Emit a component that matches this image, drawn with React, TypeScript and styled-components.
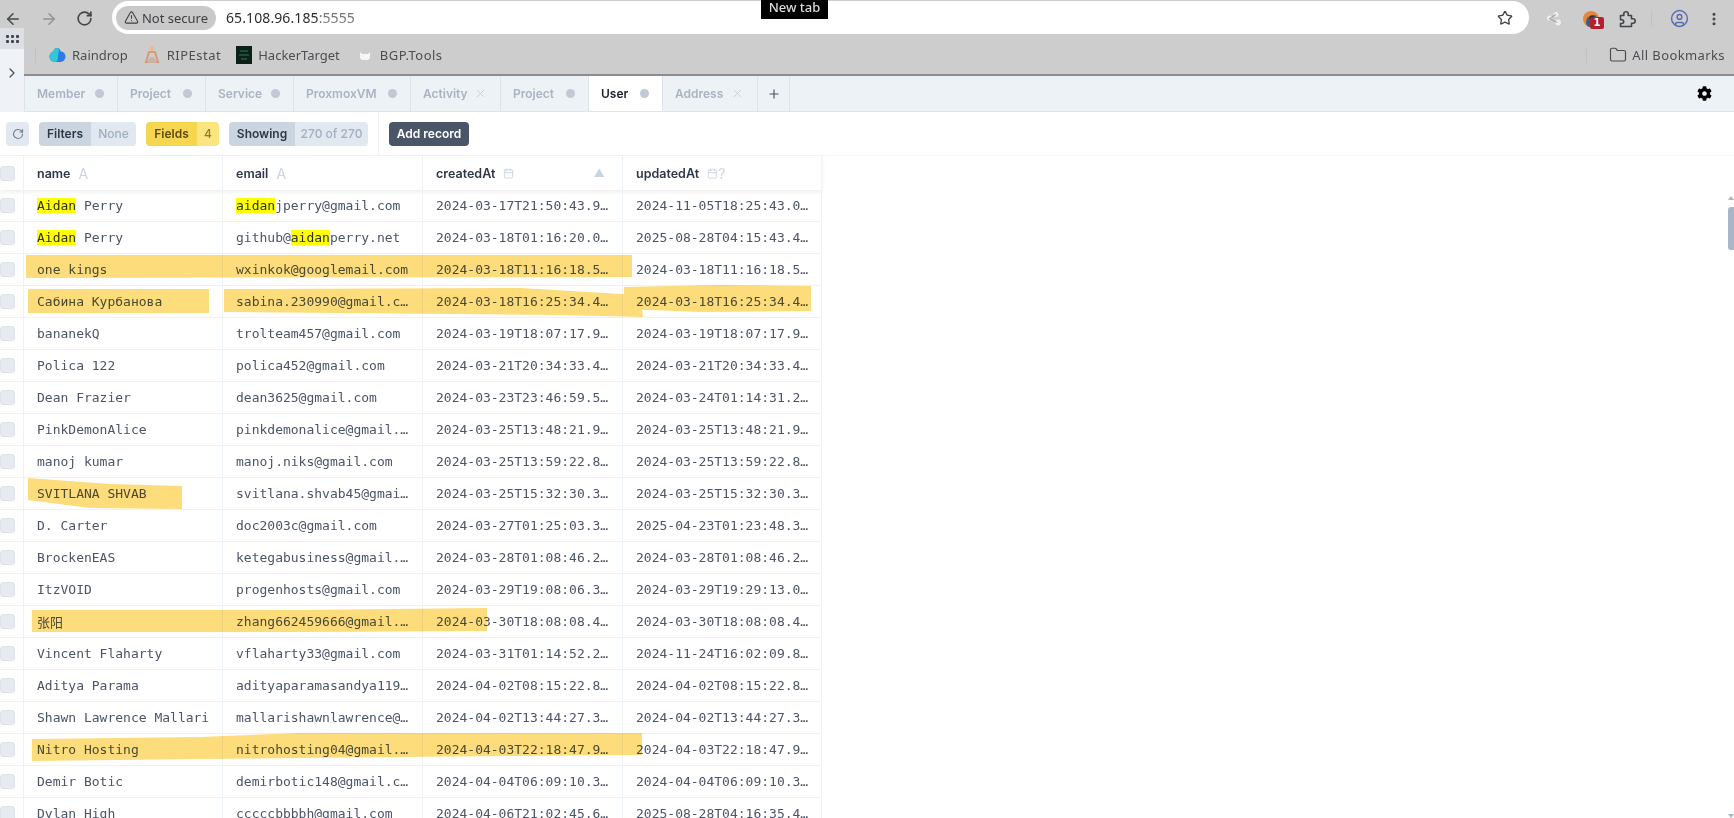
import React from "react";
import styled, { createGlobalStyle } from "styled-components";
import { ArrowLeft, ArrowRight, RotateCw, Star, TriangleAlert, CircleUser, EllipsisVertical, Folder, Plus, X, ChevronRight, Calendar } from "lucide-react";
import { FaCog } from "react-icons/fa";

const Global = createGlobalStyle`
  html, body { margin: 0; padding: 0; background: #fff; overflow: hidden; }
  * { box-sizing: border-box; }
`;

const UI = `"Noto Sans", "Open Sans", sans-serif`;
const APP = `Inter, "Liberation Sans", sans-serif`;
const MONO = `"DejaVu Sans Mono", "Noto Sans CJK SC", monospace`;

const Page = styled.div`
  position: relative;
  width: 1734px;
  height: 818px;
  overflow: hidden;
  display: flex;
  flex-direction: column;
  & > * { flex: none; }
`;

const BrowserBar = styled.div`
  height: 37px;
  background: #cdcdcd;
  display: flex;
  align-items: center;
  padding: 0 0 0 4px;
  color: #45494d;
`;
const Nav = styled.div`
  display: flex;
  gap: 18px;
  margin-right: 19px;
`;
const NavIcon = styled.span<{ $dim?: boolean }>`
  display: flex;
  color: ${(p) => (p.$dim ? "#8f9295" : "#43474b")};
`;
const Omnibox = styled.div`
  width: 1417px;
  height: 33px;
  margin-top: -2px;
  border-radius: 17px;
  background: #fff;
  display: flex;
  align-items: center;
  padding: 0 16px 0 4px;
  font-family: ${UI};
`;
const Secure = styled.div`
  height: 24px;
  width: 100px;
  border-radius: 12px;
  background: #c9c9c9;
  display: flex;
  align-items: center;
  justify-content: center;
  gap: 3px;
  font-size: 13px;
  color: #3b3f43;
  margin-right: 10px;
`;
const Url = styled.div`
  font-size: 14px;
  color: #2a2d30;
  letter-spacing: 0.1px;
  flex: 1;
  span { color: #74777b; }
`;
const Actions = styled.div`
  display: flex;
  align-items: center;
  margin-left: auto;
  height: 100%;
  flex: 1;
  position: relative;
`;
const ActionSlot = styled.span<{ $w: number }>`
  width: ${(p) => p.$w}px;
  display: flex;
  justify-content: center;
  flex: none;
`;
const ThinSep = styled.span`
  width: 1px;
  height: 16px;
  background: #c2c2c2;
  flex: none;
`;
const ExtWrap = styled.span`
  position: relative;
  display: flex;
  width: 16px;
  height: 16px;
`;
const Badge = styled.span`
  position: absolute;
  left: 7px;
  top: 6px;
  width: 14px;
  height: 12px;
  border-radius: 2px;
  background: #b3202f;
  color: #fff;
  font: 700 10px/12px "DejaVu Sans", sans-serif;
  text-align: center;
`;
const TabTip = styled.div`
  position: absolute;
  left: 761px;
  top: 0;
  width: 67px;
  height: 19px;
  background: #000;
  color: #dcdcdc;
  font: 500 13px/15px ${UI};
  text-align: center;
`;

const BookmarkBar = styled.div`
  height: 39px;
  background: #cdcdcd;
  border-bottom: 2px solid #8d8d8d;
  display: flex;
  align-items: center;
  padding: 0 0 2px 35px;
  font-family: ${UI};
  font-size: 13px;
  color: #4a4d51;
`;
const Bookmark = styled.span<{ $gap: number; $left: number; $ls?: number }>`
  display: flex;
  align-items: center;
  gap: ${(p) => p.$gap}px;
  margin-left: ${(p) => p.$left}px;
  letter-spacing: ${(p) => p.$ls ?? 0}px;
  white-space: nowrap;
`;
const AllMarks = styled.div`
  margin-left: auto;
  display: flex;
  align-items: center;
  gap: 5px;
  padding-right: 9px;
  letter-spacing: 0.4px;
`;
const MarksSep = styled(ThinSep)`
  margin-right: 17px;
`;

const SidePanel = styled.div`
  position: absolute;
  left: 0;
  top: 28px;
  width: 24px;
  height: 84px;
  display: flex;
  flex-direction: column;
  background: #eff2f6;
`;
const SideTop = styled.div`
  height: 21px;
  background: #dcdfe4;
  display: flex;
  align-items: center;
  justify-content: center;
`;
const SideChevron = styled.div`
  height: 32px;
  display: flex;
  align-items: flex-end;
  justify-content: center;
  color: #4b5058;
`;

const TabsBar = styled.div`
  height: 36px;
  background: #edf2f7;
  border-bottom: 1px solid #dfe4ea;
  display: flex;
  align-items: stretch;
  padding-left: 24px;
  font-family: ${APP};
`;
const Tab = styled.div<{ $active?: boolean; $w: number }>`
  width: ${(p) => p.$w}px;
  flex: none;
  display: flex;
  align-items: center;
  justify-content: space-between;
  padding: 0 13px 0 12px;
  font-size: 12px;
  font-weight: 600;
  border-left: 1px solid #dde3ea;
  color: ${(p) => (p.$active ? "#1a202c" : "#a9b4c3")};
  background: ${(p) => (p.$active ? "#fff" : "#edf2f7")};
`;
const TabDot = styled.span`
  width: 9px;
  height: 9px;
  border-radius: 50%;
  background: #c0c9d4;
`;
const AddTab = styled.div`
  width: 33px;
  display: flex;
  align-items: center;
  justify-content: center;
  border-left: 1px solid #dde3ea;
  border-right: 1px solid #dde3ea;
  color: #4a5568;
`;
const Gear = styled.div`
  margin-left: auto;
  padding-right: 22px;
  display: flex;
  align-items: center;
  color: #000;
`;

const ToolBar = styled.div`
  height: 44px;
  display: flex;
  align-items: center;
  padding-left: 6px;
  border-bottom: 1px solid #f2f4f7;
  font-family: ${APP};
  font-size: 12px;
  font-weight: 600;
`;
const Reload = styled.div`
  width: 23px;
  height: 24px;
  border-radius: 4px;
  background: #e2e8f0;
  display: flex;
  align-items: center;
  justify-content: center;
  color: #718096;
  margin-right: 10px;
`;
const Pill = styled.div<{ $w: number; $mr: number }>`
  width: ${(p) => p.$w}px;
  margin-right: ${(p) => p.$mr}px;
  height: 24px;
  border-radius: 4px;
  overflow: hidden;
  display: flex;
  flex: none;
`;
const PillKey = styled.span<{ $w: number; $yellow?: boolean }>`
  width: ${(p) => p.$w}px;
  display: flex;
  align-items: center;
  justify-content: center;
  background: ${(p) => (p.$yellow ? "#f6d651" : "#cbd5e0")};
  color: ${(p) => (p.$yellow ? "#5f4b10" : "#2d3748")};
`;
const PillValue = styled.span<{ $yellow?: boolean }>`
  flex: 1;
  display: flex;
  align-items: center;
  justify-content: center;
  font-weight: 500;
  background: ${(p) => (p.$yellow ? "#fae57f" : "#e2e8f0")};
  color: ${(p) => (p.$yellow ? "#8f7a2c" : "#a0aec0")};
`;
const ToolSep = styled.span`
  width: 1px;
  height: 100%;
  background: #f0f2f5;
  margin: 0 10px 0 0;
`;
const AddRecord = styled.div`
  width: 80px;
  height: 24px;
  border-radius: 4px;
  background: #4a5568;
  color: #fff;
  display: flex;
  align-items: center;
  justify-content: center;
`;

const Grid = styled.div`
  width: 822px;
  display: flex;
  flex-direction: column;
`;
const HeadRow = styled.div`
  display: grid;
  grid-template-columns: 24px 199px 200px 200px 199px;
  height: 34px;
  flex: none;
  font-family: ${APP};
  font-size: 12.5px;
  font-weight: 600;
  color: #2d3748;
  box-shadow: 0 2px 4px rgba(0, 0, 0, 0.07);
`;
const Row = styled.div`
  display: grid;
  grid-template-columns: 24px 199px 200px 200px 199px;
  height: 32px;
  flex: none;
  border-bottom: 1px solid #edf2f7;
  font-family: ${MONO};
  font-size: 13px;
  color: #4a5568;
`;
const CheckCell = styled.div`
  display: flex;
  align-items: center;
  border-right: 1px solid #edf2f7;
`;
const Check = styled.span`
  width: 15px;
  height: 15px;
  border-radius: 3px;
  background: #e6ebf2;
  border: 1px solid #dee3ea;
`;
const HeadCell = styled.div`
  display: flex;
  align-items: center;
  gap: 8px;
  padding: 0 13px;
  border-right: 1px solid #edf2f7;
  position: relative;
`;
const Cell = styled.div`
  display: flex;
  align-items: center;
  padding: 0 13px;
  border-right: 1px solid #edf2f7;
  white-space: pre;
  overflow: hidden;
  mark { background: #ffff00; color: #2d3320; }
`;
const TypeGlyph = styled.span`
  color: #cbd5e0;
  font-weight: 400;
  font-size: 14px;
  display: flex;
  align-items: center;
`;
const SortMark = styled.span`
  margin-left: auto;
  margin-right: 4px;
  color: #cbd5e0;
  font-size: 11px;
`;

const Scrollbar = styled.div`
  position: absolute;
  right: 0;
  top: 196px;
  bottom: 0;
  width: 6px;
  display: flex;
  flex-direction: column;
  justify-content: space-between;
`;
const ScrollArrow = styled.span<{ $down?: boolean }>`
  width: 0;
  height: 0;
  border-left: 3px solid transparent;
  border-right: 3px solid transparent;
  ${(p) => (p.$down ? "border-top: 4px solid #a9b6c9;" : "border-bottom: 4px solid #a9b6c9;")}
`;
const ScrollThumb = styled.span`
  position: absolute;
  top: 11px;
  left: 0;
  width: 6px;
  height: 43px;
  border-radius: 3px 0 0 3px;
  background: #a9b6c9;
`;
const Marker = styled.svg`
  position: absolute;
  left: 0;
  top: 0;
  width: 1734px;
  height: 818px;
  mix-blend-mode: multiply;
  pointer-events: none;
`;

const marks = [
  "26,255 632,255 632,277 26,278",
  "28,289 209,289 209,313 28,313",
  "224,289 520,288 640,295 643,317 560,315 224,312",
  "624,287 720,285 811,286 811,311 700,312 624,309",
  "28,478 110,484 182,486 182,509 90,508 28,500",
  "32,610 300,610 487,608 487,631 300,632 32,632",
  "32,739 200,737 300,733 642,733 642,755 400,757 200,759 32,761",
];

type R = [React.ReactNode, React.ReactNode, string, string?];
const rows: R[] = [
  [<><mark>Aidan</mark> Perry</>, <><mark>aidan</mark>jperry@gmail.com</>, "2024-03-17T21:50:43.9…", "2024-11-05T18:25:43.0…"],
  [<><mark>Aidan</mark> Perry</>, <>github@<mark>aidan</mark>perry.net</>, "2024-03-18T01:16:20.0…", "2025-08-28T04:15:43.4…"],
  ["one kings", "wxinkok@googlemail.com", "2024-03-18T11:16:18.5…"],
  ["Сабина Курбанова", "sabina.230990@gmail.c…", "2024-03-18T16:25:34.4…"],
  ["bananekQ", "trolteam457@gmail.com", "2024-03-19T18:07:17.9…"],
  ["Polica 122", "polica452@gmail.com", "2024-03-21T20:34:33.4…"],
  ["Dean Frazier", "dean3625@gmail.com", "2024-03-23T23:46:59.5…", "2024-03-24T01:14:31.2…"],
  ["PinkDemonAlice", "pinkdemonalice@gmail.…", "2024-03-25T13:48:21.9…"],
  ["manoj kumar", "manoj.niks@gmail.com", "2024-03-25T13:59:22.8…"],
  ["SVITLANA SHVAB", "svitlana.shvab45@gmai…", "2024-03-25T15:32:30.3…"],
  ["D. Carter", "doc2003c@gmail.com", "2024-03-27T01:25:03.3…", "2025-04-23T01:23:48.3…"],
  ["BrockenEAS", "ketegabusiness@gmail.…", "2024-03-28T01:08:46.2…"],
  ["ItzVOID", "progenhosts@gmail.com", "2024-03-29T19:08:06.3…", "2024-03-29T19:29:13.0…"],
  ["张阳", "zhang662459666@gmail.…", "2024-03-30T18:08:08.4…"],
  ["Vincent Flaharty", "vflaharty33@gmail.com", "2024-03-31T01:14:52.2…", "2024-11-24T16:02:09.8…"],
  ["Aditya Parama", "adityaparamasandya119…", "2024-04-02T08:15:22.8…"],
  ["Shawn Lawrence Mallari", "mallarishawnlawrence@…", "2024-04-02T13:44:27.3…"],
  ["Nitro Hosting", "nitrohosting04@gmail.…", "2024-04-03T22:18:47.9…"],
  ["Demir Botic", "demirbotic148@gmail.c…", "2024-04-04T06:09:10.3…"],
  ["Dylan High", "cccccbbbbh@gmail.com", "2024-04-06T21:02:45.6…", "2025-08-28T04:16:35.4…"],
];

const tabs: { n: string; w: number; x?: boolean; a?: boolean }[] = [
  { n: "Member", w: 93 },
  { n: "Project", w: 88 },
  { n: "Service", w: 88 },
  { n: "ProxmoxVM", w: 117 },
  { n: "Activity", w: 90, x: true },
  { n: "Project", w: 88 },
  { n: "User", w: 74, a: true },
  { n: "Address", w: 95, x: true },
];

const Raindrop = () => (
  <svg width="17" height="16" viewBox="0 0 17 16">
    <path d="M8 1c2 0 3.400 1.600 3.600 3.500C14 4.400 16.500 6.400 16.500 9.600c0 3-2 5.400-5 5.400H6C2.800 15 .5 12.700.5 9.800.5 6.500 3.500 4.500 4.500 4.500 4.800 2.500 6 1 8 1z" fill="#2a7de1" />
    <path d="M8 1c-2 0-3.200 1.500-3.500 3.500C2.500 5 .5 7 .5 9.800c0 2.900 2.300 5.200 5.500 5.200 2 0 3-2 3-5 0-3 .8-5 1-6.500C9.600 2 9 1 8 1z" fill="#31c6d8" />
  </svg>
);
const Ripe = () => (
  <svg width="16" height="19" viewBox="0 0 16 19">
    <circle cx="8" cy="3.500" r="2.500" fill="#e5b99a" />
    <path d="M5 7h6l3 10H2z" fill="none" stroke="#d99a78" strokeWidth="2" />
    <path d="M4 18c0-4 2-6 4-6s4 2 4 6z" fill="#c9b2a6" />
  </svg>
);
const Hacker = () => (
  <svg width="16" height="18" viewBox="0 0 16 18">
    <rect width="16" height="18" fill="#0d2018" />
    <path d="M4 5h8M3 9h10M5 13h6" stroke="#2f7a58" strokeWidth="1" />
  </svg>
);
const Bgp = () => (
  <svg width="12" height="10" viewBox="0 0 12 10">
    <path d="M1 2l2 2h6l2-2v5c0 1.500-1 3-3 3H4C2 10 1 8.500 1 7z" fill="#f6f6f6" />
  </svg>
);
const Share = () => (
  <svg width="16" height="16" viewBox="0 0 16 16" fill="#eeeeee">
    <circle cx="3.500" cy="7" r="2.500" />
    <circle cx="10" cy="3.500" r="2.500" />
    <circle cx="12" cy="11.500" r="3" />
    <path d="M3 7.500l6.500-4.500.6 1-6.500 4.500zM3.500 7l8 4-.5 1-8-4z" fill="#a5a5a5" />
  </svg>
);
const ExtIcon = () => (
  <svg width="16" height="16" viewBox="0 0 16 16">
    <circle cx="8" cy="8" r="8" fill="#e8863c" />
    <path d="M3 12c0-5 3-8 8-8 2 0 3 2 3 4 0 5-3 8-7 8-2 0-4-2-4-4z" fill="#3d5f7c" />
    <circle cx="9" cy="7" r="2.500" fill="#27313b" />
  </svg>
);
const ExtensionsIcon = () => (
  <svg width="18" height="18" viewBox="0 0 18 18" fill="none" stroke="#42464a" strokeWidth="1.6" strokeLinejoin="round">
    <path d="M2.500 5.500h3.300V4a2.200 2.200 0 0 1 4.400 0v1.500h3.300v3.300H15a2.200 2.200 0 0 1 0 4.400h-1.500v3.300h-11v-3h1.300a1.900 1.900 0 0 0 0-3.800H2.500z" />
  </svg>
);
const Dots = () => (
  <svg width="13" height="10" viewBox="0 0 13 10" fill="#3d4650">
    {[0, 5, 10].map((x) => [1, 6].map((y) => <rect key={`${x}${y}`} x={x} y={y} width="3" height="3" rx="1" />))}
  </svg>
);

export default function App() {
  return (
    <Page>
      <Global />
      <BrowserBar>
        <Nav>
          <NavIcon><ArrowLeft size={18} strokeWidth={2} /></NavIcon>
          <NavIcon $dim><ArrowRight size={18} strokeWidth={2} /></NavIcon>
          <NavIcon><RotateCw size={17} strokeWidth={2.4} /></NavIcon>
        </Nav>
        <Omnibox>
          <Secure><TriangleAlert size={15} strokeWidth={1.7} />Not secure</Secure>
          <Url>65.108.96.185<span>:5555</span></Url>
          <Star size={16} strokeWidth={2} color="#3f4347" />
        </Omnibox>
        <Actions>
          <ActionSlot $w={50}><Share /></ActionSlot>
          <ActionSlot $w={24}>
            <ExtWrap><ExtIcon /><Badge>1</Badge></ExtWrap>
          </ActionSlot>
          <ActionSlot $w={48}><ExtensionsIcon /></ActionSlot>
          <ThinSep />
          <ActionSlot $w={54}><CircleUser size={19} strokeWidth={1.8} color="#5c6bb0" /></ActionSlot>
          <ActionSlot $w={16}><EllipsisVertical size={18} strokeWidth={2.6} color="#42464a" /></ActionSlot>
        </Actions>
      </BrowserBar>
      <BookmarkBar>
        <ThinSep />
        <Bookmark $gap={6} $left={13}><Raindrop />Raindrop</Bookmark>
        <Bookmark $gap={7} $left={16} $ls={0.5}><Ripe />RIPEstat</Bookmark>
        <Bookmark $gap={6} $left={15}><Hacker />HackerTarget</Bookmark>
        <Bookmark $gap={9} $left={19} $ls={0.5}><Bgp />BGP.Tools</Bookmark>
        <AllMarks>
          <MarksSep />
          <Folder size={18} strokeWidth={1.6} />
          All Bookmarks
        </AllMarks>
      </BookmarkBar>
      <TabsBar>
        {tabs.map((t, i) => (
          <Tab key={i} $w={t.w} $active={t.a}>
            {t.n}
            {t.x ? <X size={13} strokeWidth={1.6} color="#c4ccd7" /> : <TabDot />}
          </Tab>
        ))}
        <AddTab><Plus size={14} strokeWidth={2} /></AddTab>
        <Gear><FaCog size={15} /></Gear>
      </TabsBar>
      <ToolBar>
        <Reload><RotateCw size={12} strokeWidth={2.4} /></Reload>
        <Pill $w={97} $mr={10}><PillKey $w={52}>Filters</PillKey><PillValue>None</PillValue></Pill>
        <Pill $w={73} $mr={10}><PillKey $w={51} $yellow>Fields</PillKey><PillValue $yellow>4</PillValue></Pill>
        <Pill $w={139} $mr={10}><PillKey $w={66}>Showing</PillKey><PillValue>270 of 270</PillValue></Pill>
        <ToolSep />
        <AddRecord>Add record</AddRecord>
      </ToolBar>
      <Grid>
        <HeadRow>
          <CheckCell><Check /></CheckCell>
          <HeadCell>name <TypeGlyph>A</TypeGlyph></HeadCell>
          <HeadCell>email <TypeGlyph>A</TypeGlyph></HeadCell>
          <HeadCell>createdAt <TypeGlyph><Calendar size={11} /></TypeGlyph><SortMark>▲</SortMark></HeadCell>
          <HeadCell>updatedAt <TypeGlyph><Calendar size={11} />?</TypeGlyph></HeadCell>
        </HeadRow>
        {rows.map((r, i) => (
          <Row key={i}>
            <CheckCell><Check /></CheckCell>
            <Cell>{r[0]}</Cell>
            <Cell>{r[1]}</Cell>
            <Cell>{r[2]}</Cell>
            <Cell>{r[3] ?? r[2]}</Cell>
          </Row>
        ))}
      </Grid>
      <SidePanel>
        <SideTop><Dots /></SideTop>
        <SideChevron><ChevronRight size={16} strokeWidth={1.8} /></SideChevron>
      </SidePanel>
      <TabTip>New tab</TabTip>
      <Scrollbar>
        <ScrollArrow />
        <ScrollThumb />
        <ScrollArrow $down />
      </Scrollbar>
      <Marker viewBox="0 0 1734 818">
        {marks.map((m) => <polygon key={m} points={m} fill="#fddc7c" />)}
      </Marker>
    </Page>
  );
}
